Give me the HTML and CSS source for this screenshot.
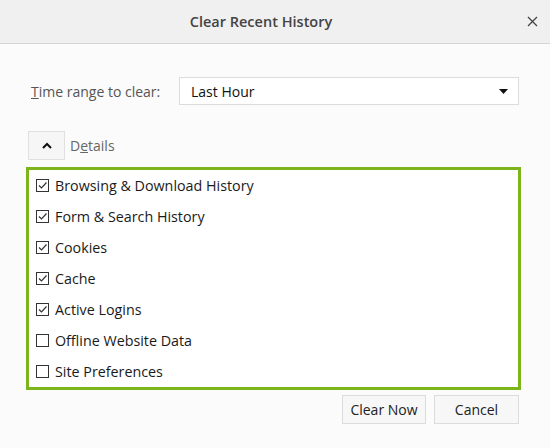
FILE: index.html
```html
<!DOCTYPE html>
<html>
<head>
<meta charset="utf-8">
<link rel="stylesheet" href="styles.css">
</head>
<body>
<div class="dialog">
  <div class="titlebar">
    <span class="title">Clear Recent History</span>
    <span class="close">
      <svg width="11" height="11" viewBox="0 0 11 11"><path d="M1 1L10 10M10 1L1 10" stroke="#444" stroke-width="1.3" fill="none"/></svg>
    </span>
  </div>
  <div class="content">
    <div class="range-row">
      <span class="label"><u>T</u>ime range to clear:</span>
      <div class="select">
        <span>Last Hour</span>
        <svg width="9" height="5" viewBox="0 0 9 5"><path d="M0 0H9L4.5 5Z" fill="#111"/></svg>
      </div>
    </div>
    <div class="details-row">
      <span class="toggle">
        <svg width="10" height="7" viewBox="0 0 10 7"><path d="M1 6L5 2L9 6" stroke="#111" stroke-width="2" fill="none"/></svg>
      </span>
      <span class="details-label">D<u>e</u>tails</span>
    </div>
    <div class="list">
      <div class="item"><span class="cb checked"><svg width="11" height="11" viewBox="0 0 11 11"><path d="M2 5.5L4.5 8L9.5 2.5" stroke="#333" stroke-width="1.2" fill="none"/></svg></span>Browsing &amp; Download History</div>
      <div class="item"><span class="cb checked"><svg width="11" height="11" viewBox="0 0 11 11"><path d="M2 5.5L4.5 8L9.5 2.5" stroke="#333" stroke-width="1.2" fill="none"/></svg></span>Form &amp; Search History</div>
      <div class="item"><span class="cb checked"><svg width="11" height="11" viewBox="0 0 11 11"><path d="M2 5.5L4.5 8L9.5 2.5" stroke="#333" stroke-width="1.2" fill="none"/></svg></span>Cookies</div>
      <div class="item"><span class="cb checked"><svg width="11" height="11" viewBox="0 0 11 11"><path d="M2 5.5L4.5 8L9.5 2.5" stroke="#333" stroke-width="1.2" fill="none"/></svg></span>Cache</div>
      <div class="item"><span class="cb checked"><svg width="11" height="11" viewBox="0 0 11 11"><path d="M2 5.5L4.5 8L9.5 2.5" stroke="#333" stroke-width="1.2" fill="none"/></svg></span>Active Logins</div>
      <div class="item"><span class="cb"></span>Offline Website Data</div>
      <div class="item"><span class="cb"></span>Site Preferences</div>
    </div>
    <div class="buttons">
      <button class="btn btn-clear">Clear Now</button>
      <button class="btn btn-cancel">Cancel</button>
    </div>
  </div>
</div>
</body>
</html>
```

FILE: styles.css
```css
html, body {
  margin: 0;
  padding: 0;
  background: #fbfbfb;
}
body {
  font-family: "Open Sans", "Noto Sans", sans-serif;
  font-size: 14px;
  color: #222;
}
.dialog {
  width: 550px;
  height: 448px;
  display: flex;
  flex-direction: column;
}
.titlebar {
  height: 44px;
  box-sizing: border-box;
  background: #f0f0f0;
  border-bottom: 1px solid #d4d4d4;
  display: flex;
  align-items: center;
  justify-content: center;
  padding-right: 28px;
  position: relative;
}
.title {
  font-size: 14.5px;
  font-weight: 600;
  color: #444;
}
.close {
  position: absolute;
  right: 12px;
  top: 16px;
  display: flex;
}
.content {
  padding: 33px 29px 0 26px;
  display: flex;
  flex-direction: column;
}
.range-row {
  display: flex;
  align-items: center;
  padding-left: 5px;
  padding-right: 2px;
}
.label {
  color: #555;
  width: 148px;
}
.select {
  flex: 1;
  height: 28px;
  box-sizing: border-box;
  border: 1px solid #dcdcdc;
  background: #fff;
  display: flex;
  align-items: center;
  justify-content: space-between;
  padding: 0 10px 0 11px;
  color: #111;
}
.details-row {
  display: flex;
  align-items: center;
  margin-top: 26px;
  padding-left: 2px;
}
.toggle {
  width: 37px;
  height: 29px;
  box-sizing: border-box;
  border: 1px solid #e0e0e0;
  background: #f6f6f6;
  display: flex;
  align-items: center;
  justify-content: center;
}
.details-label {
  color: #666;
  margin-left: 5px;
}
.list {
  margin-top: 7px;
  border: 3px solid #7cb519;
  background: #fff;
  padding: 0 0 0 7px;
  height: 223px;
  box-sizing: border-box;
  display: flex;
  flex-direction: column;
}
.item {
  height: 31px;
  flex: none;
  display: flex;
  align-items: center;
  color: #1a1a1a;
  font-size: 14.3px;
}
.cb {
  width: 13px;
  height: 13px;
  box-sizing: border-box;
  border: 1px solid #333;
  margin-right: 6px;
  display: flex;
  align-items: center;
  justify-content: center;
  background: #fff;
}
.buttons {
  display: flex;
  justify-content: flex-end;
  gap: 8px;
  margin-top: 5px;
  padding-right: 2px;
}
.btn {
  height: 29px;
  font-family: inherit;
  font-size: 14px;
  color: #222;
  background: #f7f7f7;
  border: 1px solid #dcdcdc;
  border-radius: 0;
  padding: 0;
}
.btn-clear { width: 84px; }
.btn-cancel { width: 85px; }
```
